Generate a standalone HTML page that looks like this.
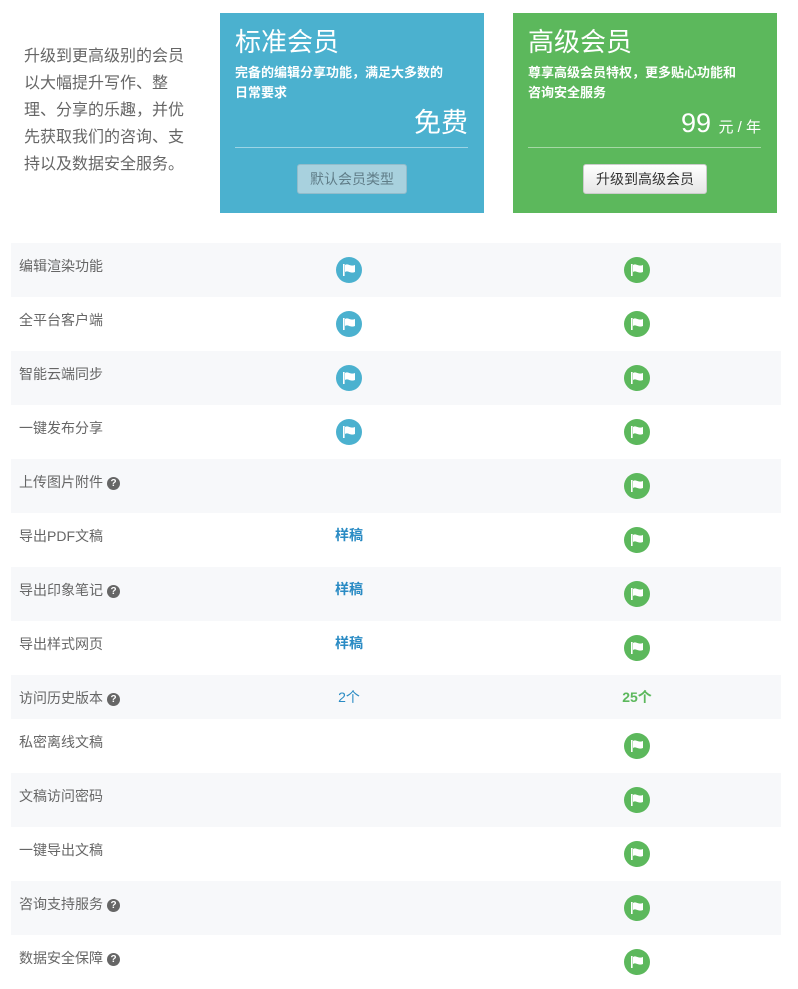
<!DOCTYPE html>
<html><head><meta charset="utf-8"><style>
body{margin:0;background:#fff;font-family:"Liberation Sans","Noto Sans CJK SC",sans-serif;color:#666;width:798px;height:986px;overflow:hidden;position:relative}
.intro{position:absolute;left:24px;top:43px;width:162px;font-size:16px;line-height:27px;color:#666}
.card{position:absolute;top:13px;width:264px;height:200px;color:#fff}
.card h2{position:absolute;left:15px;top:13px;margin:0;font-size:26px;font-weight:normal;line-height:32px}
.card .d{position:absolute;left:15px;top:50px;width:215px;font-size:13px;line-height:20px;font-weight:bold}
.card .p{position:absolute;right:16px;top:92px;font-size:27px;line-height:36px}
.card .p small{font-size:15px}
.card .hr{position:absolute;left:15px;right:16px;top:134px;height:1px;background:rgba(255,255,255,.45)}
.card .b{position:absolute;top:151px;height:28px;border-radius:3px;font-size:14px;line-height:28px;text-align:center}
.row{position:absolute;left:11px;width:770px;height:54px}
.g{background:#f7f8fa}
.row .t{position:absolute;left:8px;top:13px;font-size:14px;color:#666}
.q{display:inline-block;width:13px;height:13px;border-radius:50%;background:#666;color:#fff;font-size:10px;font-weight:bold;line-height:13px;text-align:center;vertical-align:1px;margin-left:4px}
.ic{position:absolute;top:14px;width:26px;height:26px;border-radius:50%}
.c1{left:325px;background:#4bb1cf}.c2{left:613px;background:#5cb85c}
.ic svg{position:absolute;left:6px;top:6px}
.tx{position:absolute;top:12px;font-size:14px;font-weight:bold;width:80px;text-align:center}
</style></head><body>
<div class="intro">升级到更高级别的会员以大幅提升写作、整理、分享的乐趣，并优先获取我们的咨询、支持以及数据安全服务。</div>
<div class="card" style="left:220px;background:#4bb1cf">
<h2>标准会员</h2><div class="d">完备的编辑分享功能，满足大多数的日常要求</div>
<div class="p">免费</div><div class="hr"></div>
<div class="b" style="left:77px;width:108px;background:#a8d1de;border:1px solid #92bccb;color:#607d88">默认会员类型</div></div>
<div class="card" style="left:513px;background:#5cb85c">
<h2>高级会员</h2><div class="d">尊享高级会员特权，更多贴心功能和咨询安全服务</div>
<div class="p">99 <small>元 / 年</small></div><div class="hr"></div>
<div class="b" style="left:70px;width:122px;background:linear-gradient(#fff,#e6e6e6);border:1px solid #ccc;color:#333">升级到高级会员</div></div>
<div id="rows"></div>
<script>
var F='<svg width="14" height="14" viewBox="0 0 14 14"><rect x="1" y="1" width="1.6" height="12" fill="#fff"/><path d="M3 2c3-2 5 2 10 0v7c-5 2-7-2-10 0z" fill="#fff"/></svg>';
var rows=[["编辑渲染功能",1,1],["全平台客户端",1,1],["智能云端同步",1,1],["一键发布分享",1,1],["上传图片附件?",0,1],["导出PDF文稿","样稿",1],["导出印象笔记?","样稿",1],["导出样式网页","样稿",1],["访问历史版本?","2个","25个"],["私密离线文稿",0,1],["文稿访问密码",0,1],["一键导出文稿",0,1],["咨询支持服务?",0,1],["数据安全保障?",0,1]];
var y=243,h='';
rows.forEach(function(r,i){var hh=(i==8)?44:54;
var t=r[0].replace('?','<span class="q">?</span>');
h+='<div class="row'+(i%2==0?' g':'')+'" style="top:'+y+'px;height:'+hh+'px"><div class="t">'+t+'</div>';
if(r[1]===1)h+='<div class="ic c1">'+F+'</div>';else if(r[1])h+='<div class="tx" style="left:298px;color:#2a8bc4;font-weight:'+(i==8?'normal':'bold')+'">'+r[1]+'</div>';
if(r[2]===1)h+='<div class="ic c2">'+F+'</div>';else if(r[2])h+='<div class="tx" style="left:586px;color:#5cb85c">'+r[2]+'</div>';
h+='</div>';y+=hh;});
document.getElementById('rows').innerHTML=h;
</script>
</body></html>
